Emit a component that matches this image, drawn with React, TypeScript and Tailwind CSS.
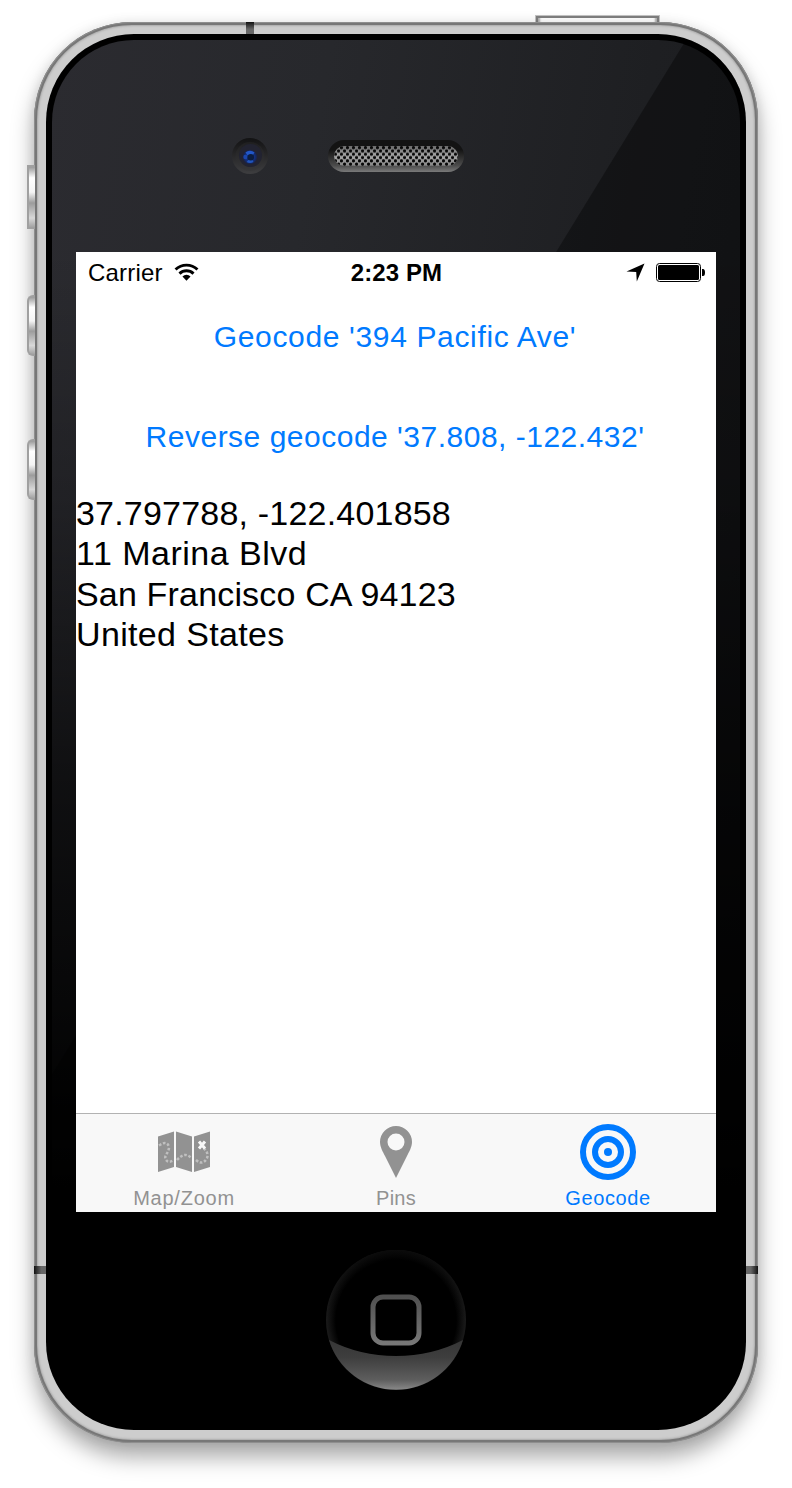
import React from "react";

function SideButton({ className }: { className: string }) {
  return (
    <div
      className={
        "absolute -left-[7px] w-[8px] border-2 border-r-0 border-[#a0a0a0] bg-[linear-gradient(180deg,#9a9a9a_0%,#ffffff_18%,#f4f4f4_42%,#9c9c9c_60%,#d8d8d8_85%,#a4a4a4_100%)] " +
        className
      }
    />
  );
}

function Camera() {
  return (
    <svg className="h-9 w-9" viewBox="0 0 36 36">
      <defs>
        <linearGradient id="cam" x1="0" y1="0" x2="0" y2="1">
          <stop offset="0" stopColor="#121213" />
          <stop offset="1" stopColor="#3e3e40" />
        </linearGradient>
        <linearGradient id="ring" x1="0" y1="0" x2="0" y2="1">
          <stop offset="0" stopColor="#1f1f20" />
          <stop offset="1" stopColor="#373739" />
        </linearGradient>
        <radialGradient id="lens">
          <stop offset="0" stopColor="#0a1430" />
          <stop offset="0.6" stopColor="#113084" />
          <stop offset="1" stopColor="#1b2140" />
        </radialGradient>
      </defs>
      <circle cx="18" cy="18" r="18" fill="url(#cam)" />
      <circle cx="18" cy="18.5" r="14.5" fill="url(#ring)" />
      <circle cx="18.500" cy="17.500" r="11.5" fill="#222331" />
      <circle cx="18" cy="19" r="7.3" fill="url(#lens)" />
      <path d="M13.500 14.500a6.500 6.500 0 0 1 9 0l-2 3h-5z" fill="#2257c8" />
      <circle cx="13.500" cy="19" r="2.200" fill="#1b46ad" />
      <path d="M14.500 24q3.500 2 7 0l-1-2h-4z" fill="#2055bd" />
      <circle cx="18.800" cy="19.300" r="3.200" fill="#0b1d40" />
    </svg>
  );
}

function Speaker() {
  return (
    <svg className="h-8 w-[136px]" viewBox="0 0 136 32">
      <defs>
        <linearGradient id="spk" x1="0" y1="0" x2="0" y2="1">
          <stop offset="0" stopColor="#131313" />
          <stop offset="0.3" stopColor="#131313" />
          <stop offset="0.8" stopColor="#4c4c4c" />
          <stop offset="1" stopColor="#7a7a7a" />
        </linearGradient>
        <linearGradient id="mesh" x1="0" y1="0" x2="0" y2="1">
          <stop offset="0" stopColor="#6a6a6a" />
          <stop offset="0.5" stopColor="#a8a8a8" />
          <stop offset="1" stopColor="#858585" />
        </linearGradient>
        <pattern id="holes" width="6" height="6.600" patternUnits="userSpaceOnUse" x="6" y="6">
          <circle cx="1.500" cy="1.650" r="1.600" fill="#070707" />
          <circle cx="4.500" cy="4.950" r="1.600" fill="#070707" />
        </pattern>
      </defs>
      <rect width="136" height="32" rx="16" fill="url(#spk)" />
      <rect x="6" y="6" width="124" height="20" rx="10" fill="url(#mesh)" />
      <rect x="6" y="6" width="124" height="20" rx="10" fill="url(#holes)" />
    </svg>
  );
}

function StatusBar() {
  return (
    <div className="flex h-10 items-center text-black">
      <div className="flex flex-1 items-center pl-3">
        <span className="pt-[2px] text-[24px] leading-10 tracking-[0.2px] whitespace-nowrap">Carrier</span>
        <svg className="ml-[11px] h-[18px] w-[25px]" viewBox="0 0 26 18">
          <path d="M1.600 6.400a16.500 16.500 0 0 1 22.800 0" fill="none" stroke="#000" strokeWidth="3" />
          <path d="M5.700 10.700a10.500 10.500 0 0 1 14.600 0" fill="none" stroke="#000" strokeWidth="3" />
          <path d="M8.800 13.600a6 6 0 0 1 8.400 0L13 18z" />
        </svg>
      </div>
      <span className="pt-[2px] text-[24px] leading-10 font-bold tracking-[0.1px] whitespace-nowrap">2:23 PM</span>
      <div className="flex flex-1 items-center justify-end pr-[11px]">
        <svg className="mr-[11px] h-[19px] w-[19px]" viewBox="0 0 19 19">
          <path d="M18.500 0.500L10.800 18.500L10.200 9L0.500 8.400z" />
        </svg>
        <svg className="h-[19px] w-[49px]" viewBox="0 0 49 19">
          <rect x="0.500" y="0.500" width="44" height="18" rx="3" fill="#fff" stroke="#000" />
          <rect x="2" y="2" width="41" height="15" rx="1.500" />
          <path d="M46 6h1a2 3.500 0 0 1 0 7h-1z" />
        </svg>
      </div>
    </div>
  );
}

function MapIcon() {
  return (
    <svg className="h-[56px] w-[56px]" viewBox="0 0 56 56">
      <path d="M2 12.500L18 7.500V43L2 48zM20 7.500L36 12.500V48L20 43zM38 12.500L54 7.500V43L38 48z" fill="#929292" />
      <path
        d="M3 21.500Q11 16 13 23C13 29 8 31 9.500 35Q12 40 18 36M21 36Q29 27 35 34M40 36Q47 42 51 34C53 29 49 25 47 24"
        fill="none"
        stroke="#c0c0c0"
        strokeWidth="2.500"
        strokeDasharray="2.600 1.800"
      />
      <path d="M43 17.500l6 7m0-7l-6 7" stroke="#f8f8f8" strokeWidth="3" />
    </svg>
  );
}

function PinIcon() {
  return (
    <svg className="h-[56px] w-[56px]" viewBox="0 0 56 56">
      <path
        fillRule="evenodd"
        fill="#929292"
        d="M28 2a16 16 0 0 1 16 16c0 5-3 10-5 14L28 54L17 32c-2-4-5-9-5-14A16 16 0 0 1 28 2zM28 9.500a8.500 8.500 0 1 0 0 17a8.500 8.500 0 1 0 0-17z"
      />
    </svg>
  );
}

function TargetIcon() {
  return (
    <svg className="h-[56px] w-[56px]" viewBox="0 0 56 56" fill="none" stroke="#007aff" strokeWidth="6">
      <circle cx="28" cy="28" r="25" />
      <circle cx="28" cy="28" r="13" />
      <circle cx="28" cy="28" r="4" fill="#007aff" stroke="none" />
    </svg>
  );
}

function Tab({ label, className, children }: { label: string; className: string; children: React.ReactNode }) {
  return (
    <div className={"flex w-[212px] flex-col items-center pt-[10px] " + className}>
      {children}
      <span className="mt-[6px] text-[20px] leading-6 whitespace-nowrap">{label}</span>
    </div>
  );
}

function HomeButton() {
  return (
    <svg className="h-[140px] w-[140px]" viewBox="0 0 140 140">
      <defs>
        <radialGradient id="rim">
          <stop offset="0.86" stopColor="#000" />
          <stop offset="1" stopColor="#1b1b1b" />
        </radialGradient>
        <linearGradient id="rimfade" x1="0" y1="0" x2="0" y2="1">
          <stop offset="0" stopColor="#000" stopOpacity="0.6" />
          <stop offset="0.5" stopColor="#000" stopOpacity="0" />
        </linearGradient>
        <linearGradient id="gloss" x1="0" y1="90" x2="0" y2="140" gradientUnits="userSpaceOnUse">
          <stop offset="0" stopColor="#363636" />
          <stop offset="0.35" stopColor="#3e3e3e" />
          <stop offset="0.8" stopColor="#5e5e5e" />
          <stop offset="1" stopColor="#8a8a8a" />
        </linearGradient>
        <linearGradient id="sq" x1="0" y1="0" x2="0" y2="1">
          <stop offset="0" stopColor="#505050" />
          <stop offset="1" stopColor="#777" />
        </linearGradient>
      </defs>
      <circle cx="70" cy="70" r="70" fill="url(#rim)" />
      <circle cx="70" cy="70" r="70" fill="url(#rimfade)" />
      <path d="M3 90Q34 106 70 106T137 90A70 70 0 0 1 3 90z" fill="url(#gloss)" />
      <rect x="47" y="47" width="46" height="46" rx="10" fill="#000" stroke="url(#sq)" strokeWidth="5" />
    </svg>
  );
}

export default function App() {
  return (
    <div className="flex h-[1488px] w-[792px] justify-center overflow-hidden bg-white pt-[22px] font-['Liberation_Sans',Arial,sans-serif]">
      <div className="relative h-[1421px] w-[724px]">
        <div className="absolute -top-[7px] left-[501px] h-3 w-[125px] border border-[#c4c4c4] bg-white shadow-[inset_0_0_0_2px_#808080,inset_4px_0_2px_#b0b0b0,inset_-4px_0_2px_#b0b0b0]" />
        <div className="relative h-full w-full rounded-[98px] bg-[#cdcdcd] p-3 shadow-[inset_0_0_0_1px_#8e8e8e,inset_0_0_0_3px_#777777,inset_0_0_2px_4px_#aaaaaa,0_14px_22px_rgba(0,0,0,0.34),0_0_12px_rgba(0,0,0,0.08)]">
          <SideButton className="top-[143px] h-[64px]" />
          <SideButton className="top-[273px] h-[61px] rounded-l-[6px]" />
          <SideButton className="top-[417px] h-[61px] rounded-l-[6px]" />
          <div className="absolute top-0 left-[212px] h-3 w-2 bg-[linear-gradient(180deg,#111,#666_60%)]" />
          <div className="absolute top-[1244px] left-0 h-2 w-3 bg-[linear-gradient(90deg,#111,#666_60%)]" />
          <div className="absolute top-[1244px] right-0 h-2 w-3 bg-[linear-gradient(270deg,#111,#666_60%)]" />
          <div className="relative h-[1396px] w-[700px] overflow-hidden rounded-[88px] bg-black p-[6px]">
            <div className="flex h-full w-full flex-col items-center overflow-hidden rounded-[82px] bg-[linear-gradient(180deg,transparent_0%,transparent_15%,rgba(0,0,0,0.22)_33%,rgba(0,0,0,0.63)_54%,#000_83%),linear-gradient(100deg,#2b2b30_0%,#27282c_30%,#1e1f22_65%,#18191c_100%)]">
              <svg className="absolute top-[6px] right-[6px] h-[1100px] w-[688px]" viewBox="0 0 688 1100">
                <path d="M634 0H688V1100H-40z" fill="#000" fillOpacity="0.36" />
              </svg>
              <div className="relative flex h-[212px] w-full shrink-0">
                <div className="mt-[98px] ml-[180px] h-9">
                  <Camera />
                </div>
                <div className="mt-[100px] ml-[60px] h-8">
                  <Speaker />
                </div>
              </div>
              <div className="relative flex h-[960px] w-[640px] shrink-0 flex-col bg-white">
                <StatusBar />
                <button className="mt-[24px] h-[42px] self-center pr-[2px] text-[30px] leading-[42px] tracking-[0.65px] whitespace-nowrap text-[#007aff]">
                  Geocode '394 Pacific Ave'
                </button>
                <button className="mt-[58px] h-[42px] self-center pr-[2px] text-[30px] leading-[42px] tracking-[0.5px] whitespace-nowrap text-[#007aff]">
                  Reverse geocode '37.808, -122.432'
                </button>
                <div className="mt-[35px] flex-1 text-[34px] leading-[40.250px] whitespace-nowrap text-black">
                  <div className="tracking-[0.2px]">37.797788, -122.401858</div>
                  <div className="tracking-[0.5px]">11 Marina Blvd</div>
                  <div className="tracking-[0.17px]">San Francisco CA 94123</div>
                  <div className="tracking-[0.35px]">United States</div>
                </div>
                <div className="flex h-[99px] justify-center border-t border-[#b2b2b2] bg-[#f8f8f8]">
                  <Tab label="Map/Zoom" className="tracking-[0.75px] text-[#929292]">
                    <MapIcon />
                  </Tab>
                  <Tab label="Pins" className="tracking-[0.25px] text-[#929292]">
                    <PinIcon />
                  </Tab>
                  <Tab label="Geocode" className="tracking-[0.6px] text-[#007aff]">
                    <TargetIcon />
                  </Tab>
                </div>
              </div>
              <div className="relative mt-[38px] h-[140px]">
                <HomeButton />
              </div>
            </div>
          </div>
        </div>
      </div>
    </div>
  );
}
